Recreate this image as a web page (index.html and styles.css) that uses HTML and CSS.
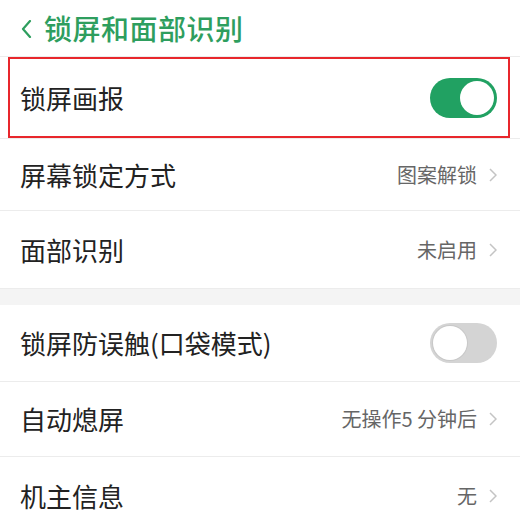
FILE: index.html
```html
<!DOCTYPE html>
<html lang="zh-CN">
<head>
<meta charset="utf-8">
<link rel="stylesheet" href="styles.css">
</head>
<body>
<div class="page">
  <header class="header">
    <svg class="back" width="12" height="18" viewBox="0 0 12 18"><polyline points="9,1 2,9 9,17" fill="none" stroke="#2e9e5e" stroke-width="2.2" stroke-linecap="round" stroke-linejoin="round"/></svg>
    <h1 class="title">锁屏和面部识别</h1>
  </header>
  <div class="row row-1 highlight">
    <span class="label">锁屏画报</span>
    <span class="switch on"><span class="knob"></span></span>
  </div>
  <div class="row row-2">
    <span class="label">屏幕锁定方式</span>
    <span class="value">图案解锁<svg class="chev" width="8" height="14" viewBox="0 0 8 14"><polyline points="1,1 7,7 1,13" fill="none" stroke="#c4c4c4" stroke-width="1.5"/></svg></span>
  </div>
  <div class="row row-3">
    <span class="label">面部识别</span>
    <span class="value">未启用<svg class="chev" width="8" height="14" viewBox="0 0 8 14"><polyline points="1,1 7,7 1,13" fill="none" stroke="#c4c4c4" stroke-width="1.5"/></svg></span>
  </div>
  <div class="gap"></div>
  <div class="row row-4">
    <span class="label">锁屏防误触(口袋模式)</span>
    <span class="switch off"><span class="knob"></span></span>
  </div>
  <div class="row row-5">
    <span class="label">自动熄屏</span>
    <span class="value">无操作5 分钟后<svg class="chev" width="8" height="14" viewBox="0 0 8 14"><polyline points="1,1 7,7 1,13" fill="none" stroke="#c4c4c4" stroke-width="1.5"/></svg></span>
  </div>
  <div class="row row-6">
    <span class="label">机主信息</span>
    <span class="value">无<svg class="chev" width="8" height="14" viewBox="0 0 8 14"><polyline points="1,1 7,7 1,13" fill="none" stroke="#c4c4c4" stroke-width="1.5"/></svg></span>
  </div>
</div>
</body>
</html>
```
FILE: styles.css
```css
* { box-sizing: border-box; }
html, body { margin: 0; padding: 0; background: #fff; }
body {
  font-family: "Noto Sans CJK SC", "Noto Sans", sans-serif;
  width: 520px;
  height: 529px;
  overflow: hidden;
}
.page { display: flex; flex-direction: column; }
.header {
  height: 57px;
  display: flex;
  align-items: center;
  padding-left: 21px;
  border-bottom: 1px solid #ececec;
}
.back { margin-right: 11px; margin-top: 1px; }
.title {
  margin: 0;
  font-size: 28px;
  font-weight: 500;
  color: #2e9e5e;
  line-height: 1;
  letter-spacing: 0.5px;
}
.row {
  display: flex;
  align-items: center;
  justify-content: space-between;
  padding: 0 23px 0 20px;
  border-bottom: 1px solid #ececec;
  background: #fff;
}
.row-1 { height: 82px; position: relative; }
.row-2 { height: 72px; }
.row-3 { height: 77px; border-bottom: none; }
.row-4 { height: 77px; }
.row-5 { height: 75px; }
.row-6 { height: 77px; border-bottom: none; }
.highlight::after {
  content: "";
  position: absolute;
  left: 8px;
  right: 10px;
  top: 0;
  bottom: 0;
  border: 2px solid #e8262c;
  pointer-events: none;
}
.gap {
  height: 17px;
  background: #f4f4f4;
  border-top: 1px solid #ececec;
}
.label {
  font-size: 26px;
  color: #222;
  line-height: 1;
}
.value {
  display: flex;
  align-items: center;
  font-size: 20px;
  color: #666;
  line-height: 1;
}
.chev { margin-left: 12px; }
.switch {
  width: 67px;
  height: 40px;
  border-radius: 20px;
  position: relative;
  flex: none;
}
.switch .knob {
  position: absolute;
  top: 3px;
  width: 34px;
  height: 34px;
  border-radius: 50%;
  background: #fff;
}
.switch.on { background: #21a162; }
.switch.on .knob { right: 3px; }
.switch.off { background: #d4d4d4; }
.switch.off .knob { left: 3px; box-shadow: 0 0 0 1px #c8c8c8; }
```
